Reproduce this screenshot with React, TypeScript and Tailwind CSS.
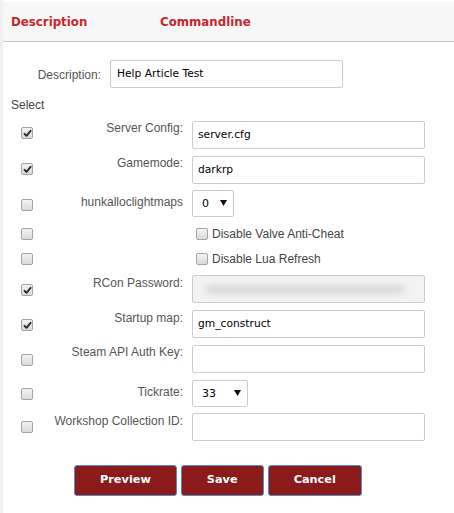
import React from "react";

const Check = ({ checked, size = 12 }: { checked?: boolean; size?: number }) => (
  <div
    className="shrink-0 rounded-[2px] border border-[#a3a3a3] bg-gradient-to-b from-[#f3f3f3] to-[#dadada] flex items-center justify-center"
    style={{ width: size, height: size }}
  >
    {checked && (
      <svg width="9" height="9" viewBox="0 0 9 9">
        <path d="M1.5 4.8 L3.5 6.8 L7.6 1.8" fill="none" stroke="#2b2b2b" strokeWidth="1.9" strokeLinecap="round" strokeLinejoin="round" />
      </svg>
    )}
  </div>
);

const TextBox = ({ value }: { value?: string }) => (
  <div className="w-[233px] h-[28px] border border-[#cccccc] rounded-[2px] bg-white flex items-center pl-[5px] font-['DejaVu_Sans',sans-serif] text-[10.7px] text-black">
    {value}
  </div>
);

const SelectBox = ({ value, width }: { value: string; width: number }) => (
  <div
    className="h-[27px] border border-[#cccccc] rounded-[2px] bg-white flex items-center justify-between pl-[9px] pr-[6px] font-['DejaVu_Sans',sans-serif] text-[11px] text-black"
    style={{ width }}
  >
    <span className="mt-[2px]">{value}</span>
    <svg width="7" height="6" viewBox="0 0 7 6" className="-mt-[2px]">
      <polygon points="0,0 7,0 3.5,6" fill="#111" />
    </svg>
  </div>
);

type Row = {
  h: number;
  cb: number;
  checked: boolean;
  label?: string;
  labelPt?: number;
  kind: "text" | "select" | "check" | "secret";
  value?: string;
  selW?: number;
};

const rows: Row[] = [
  { h: 35, cb: 6, checked: true, label: "Server Config:", labelPt: 0, kind: "text", value: "server.cfg" },
  { h: 34, cb: 7, checked: true, label: "Gamemode:", labelPt: 0, kind: "text", value: "darkrp" },
  { h: 38, cb: 9, checked: false, label: "hunkalloclightmaps", labelPt: 5, kind: "select", value: "0", selW: 42 },
  { h: 25, cb: 0, checked: false, kind: "check", value: "Disable Valve Anti-Cheat" },
  { h: 22, cb: 0, checked: false, kind: "check", value: "Disable Lua Refresh" },
  { h: 35, cb: 9, checked: true, label: "RCon Password:", labelPt: 1, kind: "secret" },
  { h: 35, cb: 9, checked: true, label: "Startup map:", labelPt: 1, kind: "text", value: "gm_construct" },
  { h: 35, cb: 9, checked: false, label: "Steam API Auth Key:", labelPt: 0, kind: "text", value: "" },
  { h: 33, cb: 8, checked: false, label: "Tickrate:", labelPt: 5, kind: "select", value: "33", selW: 56 },
  { h: 30, cb: 8, checked: false, label: "Workshop Collection ID:", labelPt: 1, kind: "text", value: "" },
];

export default function App() {
  return (
    <div className="w-[454px] h-[513px] bg-white flex font-['Liberation_Sans',Arial,sans-serif] overflow-hidden">
      <div className="w-[3px] shrink-0 bg-[#f0f0f0]" />
      <div className="flex-1 flex flex-col pt-[2px]">
        {/* Tabs header */}
        <div className="h-[40px] bg-[#f7f7f7] border-b border-[#c6c6c6] flex items-start pt-[13px] pl-[8px] font-['DejaVu_Sans',sans-serif] font-bold text-[11.8px] leading-[14px] text-[#c9252e]">
          <div className="w-[149px]">Description</div>
          <div>Commandline</div>
        </div>

        {/* Description row */}
        <div className="mt-[18px] flex items-center h-[28px]">
          <div className="w-[98px] text-right text-[12px] leading-[14px] text-[#555] pt-[1px]">Description:</div>
          <div className="ml-[9px] w-[233px] h-[28px] border border-[#cccccc] rounded-[2px] bg-white flex items-center pl-[6px] font-['DejaVu_Sans',sans-serif] text-[10.7px] text-black">
            Help Article Test
          </div>
        </div>

        <div className="mt-[10px] pl-[8px] text-[12px] leading-[14px] text-[#444]">Select</div>

        <div className="mt-[9px] flex flex-col">
          {rows.map((r, i) => (
            <div key={i} className="flex items-start" style={{ height: r.h }}>
              <div className="w-[31px] pl-[18px] shrink-0" style={{ paddingTop: r.cb }}>
                <Check checked={r.checked} />
              </div>
              <div
                className="w-[149px] shrink-0 text-right text-[12px] leading-[14px] text-[#555]"
                style={{ paddingTop: r.labelPt ?? 0 }}
              >
                {r.label}
              </div>
              <div className="ml-[9px]">
                {r.kind === "text" && <TextBox value={r.value} />}
                {r.kind === "select" && <SelectBox value={r.value!} width={r.selW!} />}
                {r.kind === "secret" && (
                  <div className="w-[233px] h-[28px] border border-[#cccccc] rounded-[2px] bg-[#f3f3f3] flex items-center pl-[12px]">
                    <div className="h-[9px] w-[200px] rounded-full bg-[#d9d9d9] blur-[3px]" />
                  </div>
                )}
                {r.kind === "check" && (
                  <div className="flex items-start pl-[4px]">
                    <Check />
                    <span className="ml-[4px] -mt-[1px] text-[12px] leading-[14px] text-[#444]">{r.value}</span>
                  </div>
                )}
              </div>
            </div>
          ))}
        </div>

        {/* Buttons */}
        <div className="mt-[22px] pl-[71px] flex gap-[4px] font-['DejaVu_Sans',sans-serif] font-bold text-[11.3px] text-white">
          {["Preview", "Save", "Cancel"].map((b) => (
            <div
              key={b}
              className="h-[31px] px-[25px] flex items-center justify-center rounded-[3px] bg-[#8b1a1b] border border-[#4f8fc4]"
            >
              {b}
            </div>
          ))}
        </div>
      </div>
    </div>
  );
}
